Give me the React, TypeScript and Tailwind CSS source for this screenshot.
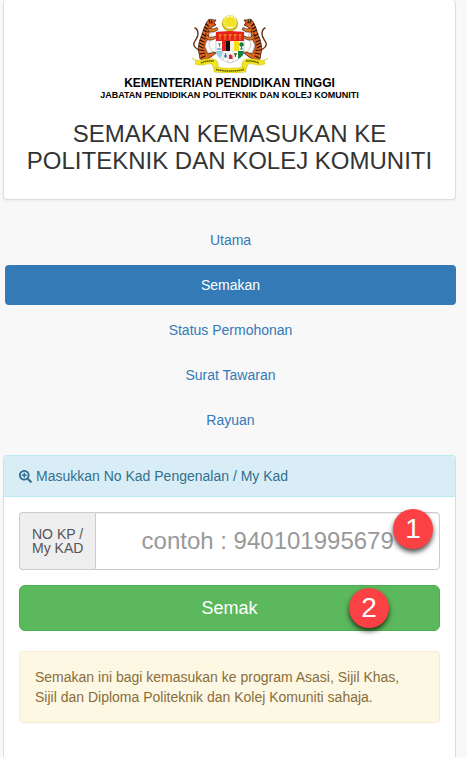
import { useState } from 'react';
import type { FormEvent } from 'react';
import { FaSearchPlus } from 'react-icons/fa';

const NAV_ITEMS = ['Utama', 'Semakan', 'Status Permohonan', 'Surat Tawaran', 'Rayuan'];

function Tiger() {
  return (
    <g strokeLinecap="round" strokeLinejoin="round">
      {/* tail */}
      <path d="M7 35C3 33 1 31 2 28C3 25 6 23 6 19C6 16 5 14 3 13" fill="none" stroke="#6b2f12" strokeWidth="1.4" />
      {/* back and hind leg */}
      <path
        d="M14 9C15 5 18 3 21 5L24 5L22 8L24 10L20 12L17 16C18 21 15 25 13 29C12 32 14 35 16 39L22 37L24 38L19 42L13 45C9 46 7 44 7.500 40C5 34 7 26 10 20C11 16 12 12 14 9Z"
        fill="#e0641c"
        stroke="#2a1208"
        strokeWidth="0.7"
      />
      {/* belly */}
      <path d="M17 17C18 21 16 25 14 28C13 31 14 34 16 38L21 37C18 34 17 31 17 28C19 25 20 22 19 18Z" fill="#fff" stroke="#8a6a50" strokeWidth="0.4" />
      {/* forelegs */}
      <path d="M16 13L21 14L25 12.500L26 14.500L22 17L17 17Z" fill="#e57a24" stroke="#2a1208" strokeWidth="0.6" />
      <path d="M14 19C16 22 18 23 21 22L24 21L24.500 23L20 25L16 25L13 22Z" fill="#e57a24" stroke="#2a1208" strokeWidth="0.6" />
      {/* stripes */}
      <path
        d="M14 9L16.500 11M12.500 12L15 14M11.500 15L15 17M10 19L14 21M9 22L13 24M8 25L12 27M7.500 28L11.500 30M7 31L11 33M7.500 35L12 35.500M8 39L13 38M9 43L13 41M17 5L18 8M19.500 6L20 8"
        stroke="#1d0d06"
        strokeWidth="1.1"
        fill="none"
      />
      <path d="M21 9L23 9" stroke="#c9201a" strokeWidth="1" />
    </g>
  );
}

function CoatOfArms() {
  return (
    <svg viewBox="0 0 76 58" className="h-[58px] w-[76px]" role="img" aria-label="Jata Negara">
      {/* crescent and star */}
      <circle cx="38" cy="8.500" r="8.200" fill="#d0ba2e" />
      <circle cx="38" cy="7" r="6.600" fill="#fff" />
      <path
        d="M38 0.500L39.300 2.500L41.500 1.400L41.900 3.600L44.200 3.800L43.400 6L45 7.300L43.400 8.600L44.200 10.800L41.900 10.900L41.500 12.600L39.300 11.600L38 13L36.700 11.600L34.500 12.600L34.100 10.900L31.800 10.800L32.600 8.600L31 7.300L32.600 6L31.800 3.800L34.100 3.600L34.500 1.400L36.700 2.500Z"
        fill="#f4e322"
      />
      <Tiger />
      <g transform="matrix(-1 0 0 1 76 0)">
        <Tiger />
      </g>
      {/* shield */}
      <path d="M24 17H52V36C52 42 45 46 38 48C31 46 24 42 24 36Z" fill="#fff" stroke="#999" strokeWidth="0.5" />
      <path d="M24 17L38 16L52 17V26H24Z" fill="#e8201c" />
      <path d="M28 19V25M33 19V25M38 19V25M43 19V25M48 19V25" stroke="#e5a51d" strokeWidth="0.9" />
      <path d="M26.500 20H30M31.500 20H35M36.500 20H40M41.500 20H45M46.500 20H50" stroke="#e5a51d" strokeWidth="0.9" />
      <path d="M30 26H34V36H30Z" fill="#e8201c" />
      <path d="M34 26H38V36H34Z" fill="#111" />
      <path d="M38 26H42V36H38Z" fill="#f3efe4" />
      <path d="M42 26H47V36H42Z" fill="#f4e017" />
      <path d="M26 29H29M27.500 28V32" stroke="#2c8c5a" strokeWidth="0.8" />
      <path d="M25 34H29.500" stroke="#2d9fd8" strokeWidth="1.200" />
      <circle cx="49.500" cy="29.500" r="2.200" fill="#167c3b" />
      <path d="M49.500 29V34M48 34H51" stroke="#167c3b" strokeWidth="0.9" />
      <path d="M24 36H31L29 43C26 41 24 39 24 36Z" fill="#8fd0ea" />
      <path d="M52 36H46V44C50 42 52 39 52 36Z" fill="#178044" />
      <path d="M31 36V45M36 36V47M41 36V47" stroke="#aaa" strokeWidth="0.5" />
      <path d="M32 41H35M33.500 38V43" stroke="#5273ad" strokeWidth="1.300" />
      <path d="M37 40L38.500 39L40.500 41V44H37Z" fill="#db2525" />
      <path d="M42 39H45M43.500 38V42" stroke="#6b5a2c" strokeWidth="1.300" />
      {/* scroll */}
      <g fill="#f2e61c" stroke="#b5a81c" strokeWidth="0.4">
        <path d="M22 51C30 54 46 54 54 51L54 57C45 58.500 31 58.500 22 57Z" />
        <path d="M0 43C6 48 12 43 18 44C24 43 27 47 26 52L22 54L20 49C14 48 12 51 7 50L3 49L4 46Z" />
        <path d="M76 43C70 48 64 43 58 44C52 43 49 47 50 52L54 54L56 49C62 48 64 51 69 50L73 49L72 46Z" />
      </g>
      <path d="M9 48C13 46 17 46 22 46M54 46C59 46 63 46 67 48" fill="none" stroke="#5a520a" strokeWidth="1.500" strokeDasharray="1.600 0.500" />
      <path d="M24 54.500C33 56.500 43 56.500 52 54.500" fill="none" stroke="#5a520a" strokeWidth="1.500" strokeDasharray="1.600 0.500" />
    </svg>
  );
}

function Header() {
  return (
    <header className="flex flex-col items-center rounded border border-t-0 border-[#ddd] bg-white px-4 pt-[15px] pb-[25px] text-center shadow-xs">
      <CoatOfArms />
      <p className="mt-1 text-[12px] leading-3 font-bold text-black">KEMENTERIAN PENDIDIKAN TINGGI</p>
      <p className="text-[9px] leading-3 font-bold text-black">JABATAN PENDIDIKAN POLITEKNIK DAN KOLEJ KOMUNITI</p>
      <h1 className="mt-[19px] text-[24px] leading-[27px]">SEMAKAN KEMASUKAN KE POLITEKNIK DAN KOLEJ KOMUNITI</h1>
    </header>
  );
}

interface MarkerProps {
  label: string;
  className: string;
}

function Marker({ label, className }: MarkerProps) {
  return (
    <span
      className={`pointer-events-none absolute flex h-10 w-10 items-center justify-center rounded-full bg-[#fc4144] text-[28px] leading-none text-white shadow-[0_3px_5px_rgba(0,0,0,0.7)] ${className}`}
    >
      {label}
    </span>
  );
}

export default function App() {
  const [active, setActive] = useState('Semakan');
  const [noKp, setNoKp] = useState('');

  const handleSubmit = (e: FormEvent) => {
    e.preventDefault();
  };

  return (
    <div className="flex min-h-screen flex-col bg-[#f8f8f8] pr-[11px] pl-[3px] font-['Liberation_Sans',Arial,sans-serif] text-[14px] leading-5 text-[#333]">
      <Header />

      <nav className="mt-5 ml-[2px] flex flex-col gap-[5px] text-center">
        {NAV_ITEMS.map((item) => (
          <a
            key={item}
            href="#"
            onClick={() => setActive(item)}
            className={`rounded px-4 py-[10px] ${item === active ? 'bg-[#337ab7] text-white' : 'text-[#337ab7]'}`}
          >
            {item}
          </a>
        ))}
      </nav>

      <section className="mt-[15px] flex-1 rounded-t border border-b-0 border-[#bce8f1] bg-white">
        <h2 className="flex items-center gap-1 rounded-t border-b border-[#bce8f1] bg-[#d9edf7] px-[15px] py-[10px] text-[#31708f]">
          <FaSearchPlus className="h-[13px] w-[13px]" />
          Masukkan No Kad Pengenalan / My Kad
        </h2>

        <form onSubmit={handleSubmit} className="p-[15px]">
          <div className="relative flex h-[58px]">
            <label
              htmlFor="no-kp"
              className="flex items-center rounded-l border border-r-0 border-[#ccc] bg-[#eee] px-3 leading-[14px] text-[#555]"
            >
              <span>
                NO KP /
                <br />
                My KAD
              </span>
            </label>
            <input
              id="no-kp"
              type="text"
              value={noKp}
              onChange={(e) => setNoKp(e.target.value)}
              placeholder="contoh : 940101995679"
              className="min-w-0 flex-1 rounded-r border border-[#ccc] bg-white px-4 text-center text-[24px] text-[#555] shadow-[inset_0_1px_1px_rgba(0,0,0,0.075)] placeholder:text-[#999]"
            />
            <Marker label="1" className="-top-[3px] right-[7px]" />
          </div>

          <div className="relative mt-[15px]">
            <button
              type="submit"
              className="w-full rounded-md border border-[#4cae4c] bg-[#5cb85c] px-4 py-[10px] text-[18px] leading-6 text-white"
            >
              Semak
            </button>
            <Marker label="2" className="top-[3px] right-[51px]" />
          </div>

          <div className="mt-5 rounded border border-[#faebcc] bg-[#fcf8e3] p-[15px] text-[#8a6d3b]">
            Semakan ini bagi kemasukan ke program Asasi, Sijil Khas, Sijil dan Diploma Politeknik dan Kolej Komuniti sahaja.
          </div>
        </form>
      </section>
    </div>
  );
}
